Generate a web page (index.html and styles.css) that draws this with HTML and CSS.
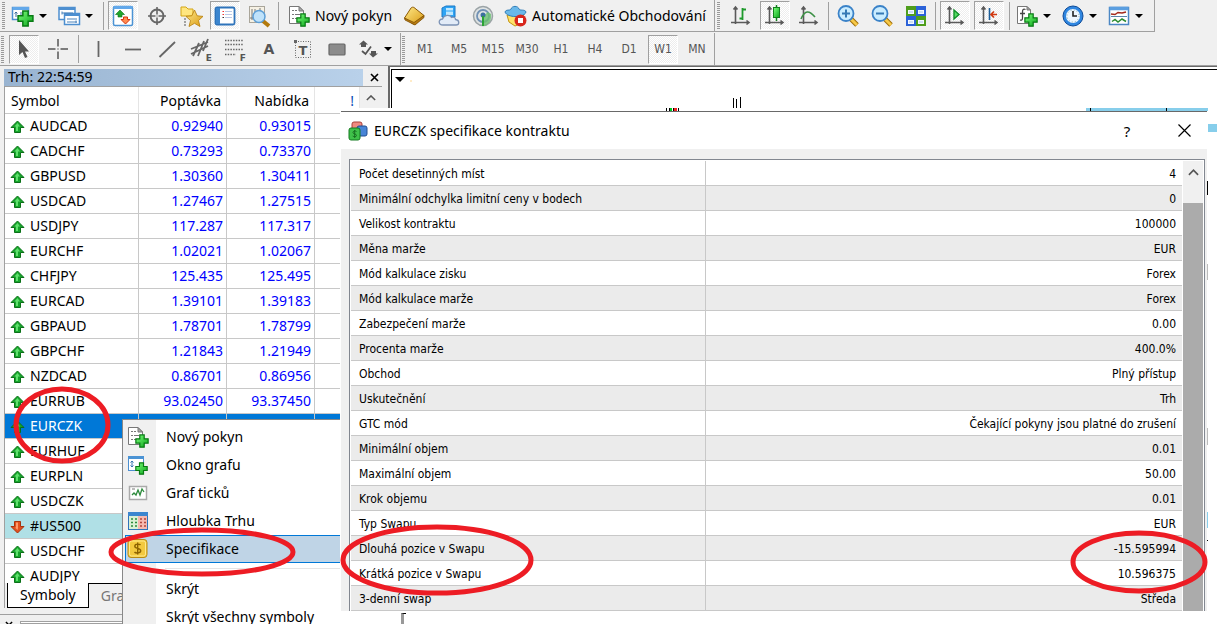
FILE: index.html
```html
<!DOCTYPE html>
<html lang="cs">
<head>
<meta charset="utf-8">
<title>EURCZK specifikace kontraktu</title>
<link rel="stylesheet" href="styles.css">
</head>
<body>
<svg class="defs" aria-hidden="true">
  <defs>
    <linearGradient id="gr" x1="0" y1="0" x2="1" y2="1"><stop offset="0" stop-color="#7dff7d"/><stop offset="1" stop-color="#0aa51a"/></linearGradient>
    <linearGradient id="go" x1="0" y1="0" x2="1" y2="1"><stop offset="0" stop-color="#ffe98a"/><stop offset="1" stop-color="#d99a12"/></linearGradient>
    <linearGradient id="bl" x1="0" y1="0" x2="1" y2="1"><stop offset="0" stop-color="#9fd8ff"/><stop offset="1" stop-color="#1d7be0"/></linearGradient>
  </defs>
  <symbol id="up" viewBox="0 0 15 14"><path d="M7.500 1L14 7.500H10.500V12.500H4.500V7.500H1Z" fill="#16a52b" stroke="#0b7018"/><path d="M7.500 3L10 6.500H8V11H6V6.500H4.500Z" fill="#5fe06c"/></symbol>
  <symbol id="down" viewBox="0 0 15 14"><path d="M7.500 13L14 6.500H10.500V1.500H4.500V6.500H1Z" fill="#e2501f" stroke="#a8330e"/><path d="M6 2.500H8V8L7.500 10L5 7.500H6Z" fill="#ff9a6a"/></symbol>
  <symbol id="plus" viewBox="0 0 16 16"><path d="M5.500 1H10.500V5.500H15V10.500H10.500V15H5.500V10.500H1V5.500H5.500Z" fill="url(#gr)" stroke="#087a14" stroke-width="1.400"/></symbol>
  <symbol id="caret" viewBox="0 0 8 4"><path d="M0 0H8L4 4Z" fill="#000"/></symbol>
  <symbol id="doc" viewBox="0 0 24 24"><path d="M2.500 2.500H12L16.500 7V19.500H2.500Z" fill="#fff" stroke="#777"/><path d="M12 2.500V7H16.500Z" fill="#aaa" stroke="#777"/><path d="M5 6.500H7M8 6.500H10M5 10.500H7M8 10.500H13M5 14.500H7M8 14.500H10" stroke="#777" stroke-width="1.200"/><use href="#plus" x="9" y="9" width="14" height="14"/></symbol>
  <symbol id="axes" viewBox="0 0 24 24"><path d="M6.500 3V20M2 18.500H20M4.500 5.500L6.500 3L8.500 5.500M17.500 16.500L20 18.500L17.500 20.500" fill="none" stroke="#5a5a5a" stroke-width="1.600"/></symbol>
  <symbol id="lens" viewBox="0 0 24 24"><path d="M15 15L21 21" stroke="#9c6a05" stroke-width="5"/><path d="M15 15L21 21" stroke="#f7c846" stroke-width="3"/><circle cx="10" cy="9.500" r="7.500" fill="#c9ecff" stroke="#3a82c8" stroke-width="1.800"/></symbol>
</svg>

<header class="toolbars">
  <div class="row">
    <div class="bar">
      <span class="grip"></span>
      <button class="tb drop" aria-label="Nový graf"><svg class="ic" viewBox="0 0 24 24"><rect x="1.500" y="3.500" width="16" height="12" fill="#fff" stroke="#4d8fd0" stroke-width="1.500"/><path d="M1.500 4.500H18" stroke="#62a8ea" stroke-width="3"/><path d="M5 8V13M3.500 9.500L5 8L6.500 9.500M10 8V13" stroke="#3d6c9c" fill="none"/><use href="#plus" x="6" y="6" width="17" height="17"/></svg><svg class="car"><use href="#caret"/></svg></button>
      <button class="tb drop" aria-label="Profily"><svg class="ic" viewBox="0 0 24 24"><g fill="#fff" stroke="#4d8fd0" stroke-width="1.500"><rect x="2" y="3.500" width="16" height="12"/><path d="M2 4.500H18" stroke-width="3"/><rect x="7.500" y="9.500" width="15" height="11"/><path d="M7.500 10.500H22.500" stroke-width="3"/></g><path d="M5 9H16M5 7.500V10.500M10 15H20M10 18H20M19 16.500V19" stroke="#4a83bb"/></svg><svg class="car"><use href="#caret"/></svg></button>
      <span class="sep"></span>
      <button class="tb on" aria-label="Tržní nabídka"><svg class="ic" viewBox="0 0 24 24"><rect x="2.500" y="2.500" width="19" height="19" rx="1.500" fill="#fff" stroke="#4b93d4" stroke-width="1.500"/><path d="M2.500 3.500H21.500" stroke="#62a8ea" stroke-width="3"/><path d="M9 6L13.500 10.500H11V13H7V10.500H4.500Z" fill="#21a52c" stroke="#0b7018" stroke-width=".6"/><path d="M14.500 20L19 15.500H16.500V13H12.500V15.500H10Z" fill="#ff8a50" stroke="#d8330b"/></svg></button>
      <button class="tb" aria-label="Datové okno"><svg class="ic" viewBox="0 0 24 24"><circle cx="12" cy="12" r="6.500" fill="none" stroke="#666" stroke-width="2"/><path d="M12 3V21M3 12H21" stroke="#666" stroke-width="1.600"/><path d="M10 12H14M12 10V14" stroke="#eee"/></svg></button>
      <button class="tb" aria-label="Navigátor"><svg class="ic" viewBox="0 0 24 24"><path d="M2 3H7L9 5H14V12H2Z" fill="#ffe680" stroke="#d3a516"/><path d="M6 14V22" stroke="#555" stroke-dasharray="2 1"/><path d="M15.500 6L18.200 11.800L24 12.400L19.500 16.500L21 22.500L15.500 19.300L10 22.500L11.500 16.500L7 12.400L12.800 11.800Z" fill="url(#go)" stroke="#b67c08" stroke-width=".8"/></svg></button>
      <button class="tb on" aria-label="Terminál"><svg class="ic" viewBox="0 0 24 24"><rect x="2.500" y="3.500" width="19" height="17" rx="1.500" fill="#fff" stroke="#2f74bb" stroke-width="1.800"/><path d="M3 4H7V20H3Z" fill="#3c86cf"/><path d="M9.500 7.500H11M9.500 10.500H11" stroke="#e33"/><path d="M9.500 13.500H11" stroke="#333"/><path d="M12 7.500H19M12 10.500H19M12 13.500H19" stroke="#b9c8e6"/></svg></button>
      <button class="tb" aria-label="Tester strategií"><svg class="ic" viewBox="0 0 24 24"><rect x="2.500" y="2.500" width="15" height="16" fill="#f6f1e4" stroke="#a9a59a"/><path d="M5 5V16M3 14H16M8 5V10M13 4V9" stroke="#777"/><path d="M16 17L22 22" stroke="#b37a0c" stroke-width="4"/><circle cx="12" cy="12.500" r="6" fill="#bfe2fa" stroke="#5e9fd6" stroke-width="1.500"/></svg></button>
      <span class="sep"></span>
      <button class="tb text"><svg class="ic" viewBox="0 0 24 24"><use href="#doc"/></svg><span>Nový pokyn</span></button>
      <button class="tb" aria-label="MetaEditor"><svg class="ic" viewBox="0 0 24 24"><path d="M1.500 14L8 4C9 3 10 3 11 3.500L21 11.500L13 19.500C12 20.500 11 20.500 10 20Z" fill="url(#go)" stroke="#8c5a06"/><path d="M1.500 14L11 18.500L21 11.500V13.500L12 21L2 16Z" fill="#b87b10" stroke="#7c4f05" stroke-width=".8"/></svg></button>
      <button class="tb" aria-label="Hosting"><svg class="ic" viewBox="0 0 24 24"><path d="M5 4L9 2H18V13H5Z" fill="#2ea4f5" stroke="#1b78c5"/><path d="M9 4H16V11H9Z" fill="#bfe8ff"/><path d="M9 7H16" stroke="#2ea4f5"/><path d="M6 21C1 21 1 15 5.500 15C7 10.500 13 10.500 14.500 13.500C17 12.500 18.500 14 18.500 15.500C23 16 22.500 21 19 21Z" fill="#e2ebf7" stroke="#7c93b5" stroke-width="1.300"/></svg></button>
      <button class="tb" aria-label="Signály"><svg class="ic" viewBox="0 0 24 24"><g fill="none"><circle cx="12" cy="12" r="9.500" fill="#dfe3e3" stroke="#9ba3a6" stroke-width="1.500"/><circle cx="12" cy="12" r="6" stroke="#7292b5" stroke-width="1.800"/></g><path d="M12 12V22C17 21.500 21 17 20 10L17 8Z" fill="#6cc070" opacity=".8"/><circle cx="12" cy="11" r="2.500" fill="#3d6f9f"/><path d="M12 12V22" stroke="#2ba335" stroke-width="2"/></svg></button>
      <button class="tb text auto"><svg class="ic" viewBox="0 0 24 24"><path d="M3 11L20 10L16 20L11 22L5 18Z" fill="#ffe26a" stroke="#c49510"/><path d="M1 8C2 5 6 7 7 5C8 1.500 14 1.500 15 5C16 7 21 5 22 8C21 12 14 12.500 11 12.500C7 12.500 2 11 1 8Z" fill="#69b8ea" stroke="#2f7db8"/><circle cx="16.500" cy="16.500" r="6" fill="#d8261c"/><rect x="14" y="14" width="5" height="5" fill="#fff"/></svg><span>Automatické Obchodování</span></button>
    </div>
    <div class="bar last">
      <span class="grip"></span>
      <button class="tb" aria-label="Sloupcový graf"><svg class="ic" viewBox="0 0 24 24"><use href="#axes"/><path d="M13.500 4V16M10.500 14.500H13.500M13.500 5.500H17" stroke="#1f9a2c" stroke-width="1.800"/></svg></button>
      <button class="tb on" aria-label="Svíčkový graf"><svg class="ic" viewBox="0 0 24 24"><use href="#axes"/><path d="M13.500 1V17" stroke="#12801d" stroke-width="1.500"/><rect x="10.500" y="3.500" width="6" height="10" fill="url(#gr)" stroke="#12801d"/></svg></button>
      <button class="tb" aria-label="Čárový graf"><svg class="ic" viewBox="0 0 24 24"><use href="#axes"/><path d="M4 15C8 6 12 6 18 13" fill="none" stroke="#3d9146" stroke-width="1.600"/></svg></button>
      <span class="sep"></span>
      <button class="tb" aria-label="Přiblížit"><svg class="ic" viewBox="0 0 24 24"><use href="#lens"/><path d="M10 5.500V13.500M6 9.500H14" stroke="#3579b5" stroke-width="2"/></svg></button>
      <button class="tb" aria-label="Oddálit"><svg class="ic" viewBox="0 0 24 24"><use href="#lens"/><path d="M6 9.500H14" stroke="#3579b5" stroke-width="2"/></svg></button>
      <button class="tb" aria-label="Uspořádat okna"><svg class="ic" viewBox="0 0 24 24"><path d="M2 2H12V12H2ZM12 12H22V22H12Z" fill="#4f9e1c"/><path d="M12 2H22V12H12ZM2 12H12V22H2Z" fill="#2c62d8"/><path d="M4 6H10V10H4ZM14 6H20V10H14ZM4 16H10V20H4ZM14 16H20V20H14Z" fill="#f3f8ff"/><path d="M5 8H9M15 8H19M5 18H9M15 18H19" stroke="#a9c4e6"/></svg></button>
      <span class="sep"></span>
      <button class="tb on" aria-label="Automatický posun"><svg class="ic" viewBox="0 0 24 24"><use href="#axes"/><path d="M11 6L16 10.500L11 15Z" fill="#55dd62" stroke="#12902a" stroke-width="1.400"/></svg></button>
      <button class="tb on" aria-label="Posun grafu"><svg class="ic" viewBox="0 0 24 24"><use href="#axes"/><path d="M12.500 4V16" stroke="#1d5f9a" stroke-width="1.600"/><path d="M20 10.500H14M17 7.500L14 10.500L17 13.500" fill="none" stroke="#d13a12" stroke-width="1.700"/></svg></button>
      <span class="sep wide"></span>
      <button class="tb drop" aria-label="Indikátory"><svg class="ic" viewBox="0 0 24 24"><path d="M2.500 2.500H12L15.500 6V19.500H2.500Z" fill="#fff" stroke="#777"/><path d="M12 2.500V6H15.500Z" fill="#aaa" stroke="#777"/><path d="M10.500 5.500C8 4.500 7.500 6 7.500 8V14C7.500 16 6.500 16.500 5 16M5 9.500H10" fill="none" stroke="#444" stroke-width="1.300"/><use href="#plus" x="9" y="9" width="14" height="14"/></svg><svg class="car"><use href="#caret"/></svg></button>
      <button class="tb drop" aria-label="Periody"><svg class="ic" viewBox="0 0 24 24"><circle cx="12" cy="12" r="8.500" fill="#eef7ff" stroke="#2f86e0" stroke-width="3"/><circle cx="12" cy="12" r="10" fill="none" stroke="#0e4b98"/><path d="M12 7V12H16" fill="none" stroke="#222" stroke-width="1.600"/><circle cx="12" cy="12" r="6" fill="none" stroke="#8aa" stroke-dasharray="1 2.140"/></svg><svg class="car"><use href="#caret"/></svg></button>
      <button class="tb drop" aria-label="Šablony"><svg class="ic" viewBox="0 0 24 24"><rect x="2.500" y="3.500" width="19" height="17" fill="#fff" stroke="#4b87c4" stroke-width="1.500"/><path d="M2.500 4.500H21.500" stroke="#5a9ee0" stroke-width="3.500"/><path d="M4 12.500H20" stroke="#5b85ac"/><path d="M4 10L8 10.500L11 8.500L15 9L19 8" fill="none" stroke="#a32a1c" stroke-width="1.500"/><path d="M5 17.500L8 15.500L11 18L15 15L19 17.500" fill="none" stroke="#2b8c32" stroke-width="1.500"/></svg><svg class="car"><use href="#caret"/></svg></button>
    </div>
  </div>
  <div class="row second">
    <div class="bar tools">
      <span class="grip"></span>
      <button class="tb on" aria-label="Kurzor"><svg class="ic" viewBox="0 0 24 24"><path d="M7 3V18L10.500 15L13 21L15.500 20L13 14.500H17Z" fill="#555"/></svg></button>
      <button class="tb" aria-label="Nitkový kříž"><svg class="ic" viewBox="0 0 24 24"><path d="M12 2V9.500M12 14.500V22M2 12H9.500M14.500 12H22" stroke="#555" stroke-width="1.500"/><circle cx="12" cy="12" r=".7" fill="#555"/></svg></button>
      <span class="sep wide"></span>
      <button class="tb" aria-label="Svislá čára"><svg class="ic" viewBox="0 0 24 24"><path d="M11.500 4V20" stroke="#666" stroke-width="1.800"/></svg></button>
      <button class="tb" aria-label="Vodorovná čára"><svg class="ic" viewBox="0 0 24 24"><path d="M4 12.500H20" stroke="#666" stroke-width="1.800"/></svg></button>
      <button class="tb" aria-label="Trendová linie"><svg class="ic" viewBox="0 0 24 24"><path d="M4.500 20L20 5" stroke="#666" stroke-width="1.800"/></svg></button>
      <button class="tb lettered" aria-label="Kanál"><svg class="ic" viewBox="0 0 24 24"><path d="M2 12L19 5M2 17L19 9M4 19L10 6M9 19L15 4M14 14L19 2" stroke="#666" stroke-width="1.800"/></svg><b class="sub">E</b></button>
      <button class="tb lettered" aria-label="Fibonacci"><svg class="ic" viewBox="0 0 24 24"><path d="M2 3.500H20M2 7.500H20M2 12.500H20M2 17.500H13" stroke="#666" stroke-width="1.500" stroke-dasharray="1.500 1.200"/></svg><b class="sub">F</b></button>
      <button class="tb letter">A</button>
      <button class="tb lettered" aria-label="Popisek"><svg class="ic" viewBox="0 0 24 24"><rect x="4.500" y="4.500" width="15" height="16" fill="none" stroke="#666" stroke-dasharray="1 1.500"/><rect x="3" y="3" width="3" height="3" fill="#666"/></svg><b class="mid">T</b></button>
      <button class="tb" aria-label="Obdélník"><svg class="ic" viewBox="0 0 24 24"><rect x="4" y="7" width="16" height="11" rx="1" fill="#8c8c8c" stroke="#666" stroke-width="1.200"/></svg></button>
      <button class="tb drop" aria-label="Šipky"><svg class="ic" viewBox="0 0 24 24"><path d="M7.500 3.500L12 7.500H10V10H5V7.500H3ZM17 20.500L13 16.500H15V14H20V16.500H22Z" fill="#555"/><path d="M6 14L9.500 17L15 9.500" fill="none" stroke="#555" stroke-width="1.800"/></svg><svg class="car"><use href="#caret"/></svg></button>
    </div>
    <div class="bar">
      <span class="grip"></span>
      <button class="tb tf">M1</button><button class="tb tf">M5</button><button class="tb tf">M15</button><button class="tb tf">M30</button><button class="tb tf">H1</button><button class="tb tf">H4</button><button class="tb tf">D1</button><button class="tb tf on">W1</button><button class="tb tf">MN</button>
    </div>
  </div>
</header>

<main class="work">
  <aside class="side">
    <section class="market">
      <div class="m-title"><h2>Trh: 22:54:59</h2><button class="m-close" aria-label="Zavřít"><svg viewBox="0 0 9 9"><path d="M1 1L8 8M8 1L1 8" stroke="#000" stroke-width="1.600"/></svg></button></div>
      <div class="m-list">
        <table class="quotes">
          <colgroup><col class="c-sym"><col class="c-num"><col class="c-num"><col></colgroup>
          <thead><tr><th class="left">Symbol</th><th>Poptávka</th><th>Nabídka</th><th class="excl">!</th></tr></thead>
          <tbody>
            <tr><td><svg class="ar"><use href="#up"/></svg>AUDCAD</td><td>0.92940</td><td>0.93015</td><td></td></tr>
            <tr><td><svg class="ar"><use href="#up"/></svg>CADCHF</td><td>0.73293</td><td>0.73370</td><td></td></tr>
            <tr><td><svg class="ar"><use href="#up"/></svg>GBPUSD</td><td>1.30360</td><td>1.30411</td><td></td></tr>
            <tr><td><svg class="ar"><use href="#up"/></svg>USDCAD</td><td>1.27467</td><td>1.27515</td><td></td></tr>
            <tr><td><svg class="ar"><use href="#up"/></svg>USDJPY</td><td>117.287</td><td>117.317</td><td></td></tr>
            <tr><td><svg class="ar"><use href="#up"/></svg>EURCHF</td><td>1.02021</td><td>1.02067</td><td></td></tr>
            <tr><td><svg class="ar"><use href="#up"/></svg>CHFJPY</td><td>125.435</td><td>125.495</td><td></td></tr>
            <tr><td><svg class="ar"><use href="#up"/></svg>EURCAD</td><td>1.39101</td><td>1.39183</td><td></td></tr>
            <tr><td><svg class="ar"><use href="#up"/></svg>GBPAUD</td><td>1.78701</td><td>1.78799</td><td></td></tr>
            <tr><td><svg class="ar"><use href="#up"/></svg>GBPCHF</td><td>1.21843</td><td>1.21949</td><td></td></tr>
            <tr><td><svg class="ar"><use href="#up"/></svg>NZDCAD</td><td>0.86701</td><td>0.86956</td><td></td></tr>
            <tr><td><svg class="ar"><use href="#up"/></svg>EURRUB</td><td>93.02450</td><td>93.37450</td><td></td></tr>
            <tr class="sel"><td><svg class="ar"><use href="#up"/></svg>EURCZK</td><td></td><td></td><td></td></tr>
            <tr><td><svg class="ar"><use href="#up"/></svg>EURHUF</td><td></td><td></td><td></td></tr>
            <tr><td><svg class="ar"><use href="#up"/></svg>EURPLN</td><td></td><td></td><td></td></tr>
            <tr><td><svg class="ar"><use href="#up"/></svg>USDCZK</td><td></td><td></td><td></td></tr>
            <tr class="idx"><td><svg class="ar"><use href="#down"/></svg>#US500</td><td></td><td></td><td></td></tr>
            <tr><td><svg class="ar"><use href="#up"/></svg>USDCHF</td><td></td><td></td><td></td></tr>
            <tr><td><svg class="ar"><use href="#up"/></svg>AUDJPY</td><td></td><td></td><td></td></tr>
          </tbody>
        </table>
        <div class="m-scroll"><svg viewBox="0 0 12 7"><path d="M1 6L6 1L11 6" fill="none" stroke="#555" stroke-width="1.800"/></svg></div>
      </div>
      <nav class="tabs"><button class="tab active">Symboly</button><button class="tab">Graf ticků</button></nav>
    </section>
    <div class="terminal"><svg class="t-close" viewBox="0 0 9 9"><path d="M1 1L8 8M8 1L1 8" stroke="#000" stroke-width="1.600"/></svg><div class="t-body"></div></div>
  </aside>
  <section class="chart"><div class="canvas">
    <svg class="candles" viewBox="0 0 400 40"><path d="M3 7H13L8 12Z" fill="#000"/><path d="M341.500 34V38M344.500 29V38M348.500 27V38M341.500 28V38" stroke="#000"/><path d="M19 10V12" stroke="#ffd890"/></svg>
  </div></section>
</main>

<div class="menu" role="menu">
  <button class="mi" role="menuitem"><svg class="mic" viewBox="0 0 24 24"><use href="#doc"/></svg><span>Nový pokyn</span></button>
  <button class="mi" role="menuitem"><svg class="mic" viewBox="0 0 24 24"><rect x="2.500" y="4.500" width="15" height="13" fill="#fff" stroke="#4d8fd0"/><path d="M2 4.500H18" stroke="#4b93d4" stroke-width="3"/><path d="M6 8V14M4.500 9.500L6 8L7.500 9.500M4.500 12.500L6 14L7.500 12.500" fill="none" stroke="#3877b0"/><use href="#plus" x="9" y="9" width="13" height="13"/></svg><span>Okno grafu</span></button>
  <button class="mi" role="menuitem"><svg class="mic" viewBox="0 0 24 24"><rect x="3.500" y="5.500" width="17" height="13" fill="#fff" stroke="#aaa" stroke-width="1.500"/><path d="M6 14L8 12L10 14L12 9L14 14L16 8L18 11" fill="none" stroke="#2c8b3c" stroke-width="1.300"/><path d="M6 8H9" stroke="#777"/></svg><span>Graf ticků</span></button>
  <button class="mi" role="menuitem"><svg class="mic" viewBox="0 0 24 24"><rect x="2.500" y="3.500" width="19" height="17" fill="#d9f0d4" stroke="#2f74bb"/><path d="M12 4H21V20H12Z" fill="#f7b9b0"/><path d="M2 5H22" stroke="#3c86cf" stroke-width="4"/><path d="M5 10H11M5 13.500H11M5 17H11" stroke="#2c8b3c" stroke-width="1.500" stroke-dasharray="2"/><path d="M14 10H20M14 13.500H20M14 17H20" stroke="#b5463a" stroke-width="1.500" stroke-dasharray="2"/></svg><span>Hloubka Trhu</span></button>
  <button class="mi hot" role="menuitem"><svg class="mic" viewBox="0 0 24 24"><rect x="2" y="2.500" width="19" height="18" rx="3" fill="#f3c93f" stroke="#b98b12"/><rect x="3.500" y="4" width="16" height="15" rx="2" fill="none" stroke="#ffe98a"/><path d="M14.500 8C13.500 6.800 8.800 6.500 8.800 9.200C8.800 12 14.700 10.800 14.700 13.700C14.700 16.500 9.500 16.300 8.500 15M11.700 5.500V17.500" fill="none" stroke="#8c6200" stroke-width="1.400"/></svg><span>Specifikace</span></button>
  <hr class="mline">
  <button class="mi" role="menuitem"><span class="mic"></span><span>Skrýt</span></button>
  <button class="mi" role="menuitem"><span class="mic"></span><span>Skrýt všechny symboly</span></button>
</div>

<div class="edge">
  <svg class="strip-left" viewBox="0 0 60 3"><path d="M.5 0V3M12.500 0V3M3.500 0V3M7.500 0V3" stroke="#000"/><path d="M4 0H6V3H4Z" fill="#0c2"/><path d="M8 0H11V3H8Z" fill="#e22"/></svg>
  <svg class="strip-right" viewBox="0 0 122 3" preserveAspectRatio="none"><path d="M0 0H122V3H0Z" fill="#87ceeb"/><path d="M4.500 0V3M80.500 0V3" stroke="#000"/></svg>
</div>
<svg class="margin-marks" viewBox="0 0 10 513"><path d="M1 16H10V24H1Z" fill="#87ceeb"/><path d="M.5 73V87" stroke="#000"/><path d="M.5 156V172M.5 320V337" stroke="#bbb"/><path d="M.5 404V420" stroke="#87ceeb"/><path d="M.5 432V433" stroke="#000"/></svg>
<span class="foot-mark"></span>

<section class="dialog" role="dialog" aria-labelledby="dlg">
  <header class="d-head">
    <svg class="d-icon" viewBox="0 0 20 20"><rect x="4" y="1" width="10" height="8" rx="2" fill="#f08a80" stroke="#a8413a"/><rect x="9" y="5" width="10" height="10" rx="2" fill="#4784d6" stroke="#234f91"/><rect x="1" y="7" width="11" height="12" rx="2" fill="#3fc14a" stroke="#157a20"/><path d="M8.500 10.500C7 9.500 5 10 5 11.500C5 13.500 8.500 12.500 8.500 14.500C8.500 16 6 16 4.700 15M6.700 9V17" fill="none" stroke="#176f20"/></svg>
    <h1 id="dlg">EURCZK specifikace kontraktu</h1>
    <button class="d-btn help">?</button>
    <button class="d-btn" aria-label="Zavřít"><svg viewBox="0 0 13 13"><path d="M.5 .5L12.500 12.500M12.500 .5L.5 12.500" stroke="#000" stroke-width="1.200"/></svg></button>
  </header>
  <div class="d-body"><div class="d-frame">
    <div class="d-table"><table class="spec">
      <tbody>
      <tr><th scope="row">Počet desetinných míst</th><td>4</td></tr>
      <tr><th scope="row">Minimální odchylka limitní ceny v bodech</th><td>0</td></tr>
      <tr><th scope="row">Velikost kontraktu</th><td>100000</td></tr>
      <tr><th scope="row">Měna marže</th><td>EUR</td></tr>
      <tr><th scope="row">Mód kalkulace zisku</th><td>Forex</td></tr>
      <tr><th scope="row">Mód kalkulace marže</th><td>Forex</td></tr>
      <tr><th scope="row">Zabezpečení marže</th><td>0.00</td></tr>
      <tr><th scope="row">Procenta marže</th><td>400.0%</td></tr>
      <tr><th scope="row">Obchod</th><td>Plný přístup</td></tr>
      <tr><th scope="row">Uskutečnění</th><td>Trh</td></tr>
      <tr><th scope="row">GTC mód</th><td>Čekající pokyny jsou platné do zrušení</td></tr>
      <tr><th scope="row">Minimální objem</th><td>0.01</td></tr>
      <tr><th scope="row">Maximální objem</th><td>50.00</td></tr>
      <tr><th scope="row">Krok objemu</th><td>0.01</td></tr>
      <tr><th scope="row">Typ Swapu</th><td>EUR</td></tr>
      <tr><th scope="row">Dlouhá pozice v Swapu</th><td>-15.595994</td></tr>
      <tr><th scope="row">Krátká pozice v Swapu</th><td>10.596375</td></tr>
      <tr><th scope="row">3-denní swap</th><td>Středa</td></tr>
      </tbody>
    </table></div>
    <div class="d-scroll"><svg viewBox="0 0 12 7"><path d="M1 6L6 1L11 6" fill="none" stroke="#555" stroke-width="1.800"/></svg><div class="thumb"></div></div>
  </div></div>
</section>

<svg class="ring ring-symbol" viewBox="0 0 100 78"><ellipse cx="50" cy="39" rx="46" ry="36"/></svg>
<svg class="ring ring-menu" viewBox="0 0 188 50"><ellipse cx="94" cy="25" rx="91" ry="22"/></svg>
<svg class="ring ring-names" viewBox="0 0 194 72"><ellipse cx="97" cy="36" rx="94" ry="33"/></svg>
<svg class="ring ring-values" viewBox="0 0 138 64"><ellipse cx="69" cy="32" rx="66" ry="29"/></svg>
</body>
</html>
```
FILE: styles.css
```css
* { box-sizing: border-box; }
body {
  margin: 0; height: 100vh; overflow: hidden; position: relative;
  display: flex; flex-direction: column;
  background: #f0f0f0; color: #000;
  font-family: "Noto Sans", "Open Sans", sans-serif; font-size: 14px; line-height: 20px;
}
button { margin: 0; padding: 0; border: 0; background: none; font: inherit; color: inherit; }
h1, h2 { margin: 0; font: inherit; }
.defs { position: absolute; width: 0; height: 0; }

/* Toolbars */
.toolbars { border-bottom: 1px solid #a0a0a0; }
.row { display: flex; height: 32px; }
.row.second { height: 33px; padding-top: 1px; }
.bar { display: flex; align-items: center; border-right: 1px solid #a0a0a0; border-bottom: 1px solid #a0a0a0; padding: 0 1px 0 2px; }
.second .bar { border-bottom: 0; padding: 0 0 0 1px; }
.bar.last { flex: 0 0 440px; }
.grip { flex: none; width: 3px; height: 27px; margin-right: 4px; background: repeating-linear-gradient(#999 0 1px, #f0f0f0 1px 2px); }
.second .grip { margin-right: 3px; }
.sep { flex: none; width: 1px; height: 28px; margin: 0 2px; background: #a0a0a0; }
.sep.wide { margin: 0 3px; }
.tb { flex: none; width: 34px; height: 31px; display: flex; align-items: center; justify-content: center; border: 1px solid transparent; position: relative; }
.tb.on { width: 30px; margin: 0 2px; height: 29px; border-color: #a0a0a0 #fff #fff #a0a0a0; background: repeating-conic-gradient(#fff 0 25%, #ededed 0 50%) 0 0 / 2px 2px; }
.tb.drop { width: 46px; justify-content: flex-start; padding-left: 1px; }
.tb.text { width: auto; padding: 0 5px; gap: 4px; white-space: nowrap; }
.tb.auto { padding: 0 6px 0 3px; }
.ic { width: 24px; height: 24px; flex: none; }
.car { width: 8px; height: 4px; margin-left: 4px; }
.tf { color: #555; font: 12px "DejaVu Sans Condensed", "DejaVu Sans", sans-serif; }
.letter { color: #555; font: bold 14px "DejaVu Sans", sans-serif; }
.sub, .mid { position: absolute; color: #555; font: bold 9px "DejaVu Sans", sans-serif; right: 5px; bottom: 1px; }
.mid { inset: 8px 0 auto; text-align: center; font-size: 13px; }

/* Work area */
.work { flex: 1; min-height: 0; display: flex; }
.side { flex: 0 0 388px; display: flex; flex-direction: column; min-height: 0; }
.market { flex: 1; min-height: 0; display: flex; flex-direction: column; padding: 2px 6px 6px 4px; }
.m-title { display: flex; align-items: center; height: 18px; }
.m-title h2 { flex: 1; padding-left: 4px; height: 17px; line-height: 16px; background: linear-gradient(90deg, #99b4d1, #b9d1ea); }
.m-close { width: 19px; height: 17px; padding-left: 3px; }
.m-close svg { width: 9px; height: 9px; display: block; margin: auto; }
.m-list { flex: 1; min-height: 0; overflow: hidden; display: flex; border: 1px solid #a0a0a0; border-right: 0; border-bottom: 0; background: #fff; }
.quotes { flex: 1; width: 0; align-self: flex-start; table-layout: fixed; border-collapse: separate; border-spacing: 0; }
.c-sym { width: 134px; }
.c-num { width: 88px; }
.quotes th { height: 27px; padding: 2px 5px 0 0; font-weight: normal; text-align: right; border-right: 1px solid #e5e5e5; border-bottom: 1px solid #c8c8c8; }
.quotes th.left { text-align: left; padding-left: 6px; }
.quotes th.excl { color: #0a4bb5; }
.quotes td { height: 25px; padding: 0 3px 0 0; text-align: right; color: #00f; border-right: 1px solid #c8c8c8; border-bottom: 1px solid #c8c8c8; line-height: 20px; }
.quotes td:first-child { text-align: left; color: #000; padding-left: 5px; }
.quotes .sel td { background: #0078d7; color: #fff; }
.quotes .sel td:first-child { color: #fff; }
.quotes .idx td { background: #b0e0e6; }
.ar { width: 15px; height: 14px; vertical-align: -3px; margin-right: 5px; }
.m-scroll { flex: 0 0 22px; background: #f0f0f0; text-align: center; }
.m-scroll svg { width: 10px; height: 6px; display: block; margin: 8px auto; }
.tabs { flex: none; height: 25px; display: flex; padding-left: 2px; border-left: 1px solid #a0a0a0; }
.tab { height: 25px; padding: 0 12px; color: #777; border-top: 1px solid #000; flex: 1; text-align: left; white-space: nowrap; }
.tab.active { flex: none; background: #fff; color: #000; border: 1px solid #000; border-top: 0; }
.terminal { height: 10px; border-top: 1px solid #a0a0a0; display: flex; overflow: hidden; gap: 7px; padding: 6px 0 0 5px; }
.t-close { width: 8px; height: 8px; flex: none; }
.t-body { flex: 1; border: 1px solid #a0a0a0; background: #fff; }
.chart { flex: 1; border: solid #696969; border-width: 1px 0 0 2px; background: #fff; padding: 2px 0 0 1px; }
.canvas { height: 100%; border: solid #000; border-width: 1px 0 0 1px; }
.candles { width: 400px; height: 40px; display: block; }

/* Context menu, floats over the list */
.menu { position: absolute; left: 122px; top: 419px; bottom: 0; width: 280px; padding: 3px 0 0 2px; border: solid #888; border-width: 1px 0 0 1px; background: linear-gradient(90deg, #f0f0f0 33px, #fff 33px); }
.mi { display: flex; align-items: center; width: 100%; height: 28px; border: 1px solid transparent; text-align: left; }
.mi.hot { background: #bfd4e6; border-color: #0078d7; }
.mic { flex: none; width: 24px; height: 24px; margin-right: 16px; }
.mline { margin: 5px 0 6px 40px; border: 0; border-top: 1px solid #e5e5e5; }

/* Chart fragments around the dialog */
.edge { position: absolute; left: 340px; right: 0; top: 108px; bottom: 0; background: #fff; display: flex; justify-content: space-between; align-items: flex-start; padding: 0 9px 0 326px; }
.strip-left { width: 60px; height: 3px; }
.strip-right { width: 122px; height: 3px; }
.margin-marks { position: absolute; right: 0; top: 108px; width: 10px; height: 513px; }
.foot-mark { position: absolute; left: 401px; bottom: 0; width: 5px; height: 11px; border-left: 3px solid #999; border-top: 1px solid #000; }

/* Dialog */
.dialog { position: absolute; left: 341px; right: 10px; top: 111px; bottom: 13px; display: flex; flex-direction: column; border-top: 1px solid #696969; background: #f0f0f0; overflow: hidden; }
.d-head { flex: 0 0 37px; display: flex; align-items: center; padding: 0 0 0 7px; background: #fff; }
.d-icon { width: 20px; height: 20px; margin-right: 6px; }
.d-head h1 { flex: 1; }
.d-btn { width: 46px; height: 36px; text-align: center; }
.d-btn.help { width: 68px; font-size: 15px; }
.d-btn svg { width: 13px; height: 13px; display: block; margin: auto; }
.d-body { flex: 1; min-height: 0; padding: 10px 2px 0 8px; }
.d-frame { height: 100%; border: 1px solid #828790; border-bottom: 0; background: #fff; display: flex; padding: 1px 1px 0; }
.d-table { flex: 1; overflow: hidden; }
.spec { width: 100%; border-collapse: separate; border-spacing: 0; font: 12px "DejaVu Sans Condensed", "DejaVu Sans", sans-serif; }
.spec th, .spec td { height: 25px; padding: 2px 6px 0 8px; border-bottom: 1px solid #c8c8c8; font-weight: normal; }
.spec th { width: 355px; text-align: left; border-right: 1px solid #c8c8c8; }
.spec td { text-align: right; }
.spec tr:nth-child(even) { background: #ebebeb; }
.d-scroll { flex: 0 0 21px; display: flex; flex-direction: column; background: #f0f0f0; border-left: 1px solid #fff; }
.d-scroll svg { width: 11px; height: 7px; margin: 8px auto 27px; flex: none; }
.thumb { flex: 1; background: #ababab; }

/* Red markings */
.ring { position: absolute; overflow: visible; }
.ring ellipse { fill: none; stroke: #ed1c24; stroke-width: 5; }
.ring-symbol { left: 12px; top: 386px; width: 100px; height: 78px; }
.ring-menu { left: 108px; top: 527px; width: 188px; height: 50px; }
.ring-names { left: 340px; top: 524px; width: 194px; height: 72px; }
.ring-values { right: 9px; top: 530px; width: 138px; height: 64px; }
```
